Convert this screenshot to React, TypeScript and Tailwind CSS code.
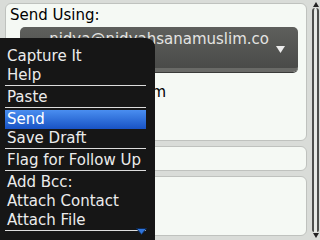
type MenuEntry = {label: string; active?: boolean} | 'sep';

const menu: MenuEntry[] = [
    {label: 'Capture It'},
    {label: 'Help'},
    'sep',
    {label: 'Paste'},
    'sep',
    {label: 'Send', active: true},
    {label: 'Save Draft'},
    'sep',
    {label: 'Flag for Follow Up'},
    'sep',
    {label: 'Add Bcc:'},
    {label: 'Attach Contact'},
    {label: 'Attach File'},
];

function ScrollBar() {
    return (
        <div className="ml-[5px] flex h-full w-[7px] flex-col items-center pt-[2px] pb-[2px]">
            <svg width="6" height="5" viewBox="0 0 6 5" className="shrink-0">
                <path d="M3 0 L6 5 L0 5 Z" fill="#222"/>
            </svg>
            <div className="mt-[1px] w-full flex-1 rounded-t-[3px] rounded-b-[2px] border-x-2 border-[#4d4f4c] bg-[#e6e9e5]"/>
            <svg width="6" height="5" viewBox="0 0 6 5" className="mt-[1px] shrink-0">
                <path d="M0 0 L6 0 L3 5 Z" fill="#222"/>
            </svg>
        </div>
    );
}

function OptionsMenu() {
    return (
        <div className="absolute top-[38px] bottom-0 left-0 w-[155px] rounded-tr-[9px] bg-[#161616] pt-[9px] pr-[9px] pl-[5px] text-[15px] leading-[19px] text-[#ececec]">
            {menu.map((item, i) =>
                item === 'sep' ? (
                    <div key={i} className="mb-[2px] h-px bg-[#dcdcdc]"/>
                ) : (
                    <div
                        key={i}
                        className={
                            item.active
                                ? 'h-[19px] bg-gradient-to-b from-[#4a8ef0] to-[#1852c4] pl-[2px] text-white'
                                : 'h-[19px] pl-[2px]'
                        }
                    >
                        {item.label}
                    </div>
                )
            )}
            <div className="relative h-px bg-[#dcdcdc]">
                <svg width="11" height="7" viewBox="0 0 11 7" className="absolute -top-[2px] -right-[1px]">
                    <path d="M0.5 0.5 L10.5 0.5 L5.5 6.5 Z" fill="#2f74dc" stroke="#0d2a55" strokeWidth="1"/>
                </svg>
            </div>
        </div>
    );
}

export default function App() {
    return (
        <div className="relative flex h-[240px] w-[320px] overflow-hidden bg-[#d9dcd8] font-['DejaVu_Sans',sans-serif] text-[15px]">
            <div className="flex w-[307px] flex-col gap-[5px] pt-[3px] pl-[5px]">
                <div className="h-[138px] rounded-[6px] border border-[#bfc2be] bg-[#f5f9f4]">
                    <div className="pt-[2px] pl-[4px] leading-[18px] text-black">Send Using:</div>
                    <div className="mt-[3px] mr-[8px] ml-[14px] flex h-[45px] items-center rounded-[5px] border-b-[4px] border-[#696a67] bg-gradient-to-b from-[#5e5f5c] to-[#4a4b49] shadow-[0_1px_0_#3a3b39]">
                        <div className="flex-1 self-start overflow-hidden pt-[3px] text-right leading-[18px] whitespace-nowrap text-[#e4e4e2]">
                            nidya@nidyahsanamuslim.co
                        </div>
                        <svg width="9" height="7" viewBox="0 0 9 7" className="mt-[4px] mr-[13px] ml-[7px] shrink-0">
                            <path d="M0 0 L9 0 L4.5 7 Z" fill="#ececec"/>
                        </svg>
                    </div>
                    <div className="mt-[11px] w-[160px] text-right leading-[18px] whitespace-nowrap text-black">
                        nidya@gmail.com
                    </div>
                </div>
                <div className="h-[25px] rounded-[6px] border border-[#bfc2be] bg-[#f5f9f4]"/>
                <div className="h-[60px] rounded-[6px] border border-[#bfc2be] bg-[#f5f9f4]"/>
            </div>
            <ScrollBar/>
            <OptionsMenu/>
        </div>
    );
}
